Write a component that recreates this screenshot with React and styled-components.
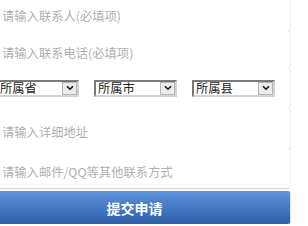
import styled, { createGlobalStyle } from "styled-components";

const GlobalStyle = createGlobalStyle`
  html, body {
    margin: 0;
    padding: 0;
    background: #fff;
    overflow: hidden;
  }
`;

const FONT = `"Noto Sans CJK SC", "Noto Sans", sans-serif`;

const Form = styled.form`
  width: 295px;
  margin-left: -5px;
  margin-top: -7px;
  display: flex;
  flex-direction: column;
  font-family: ${FONT};
`;

const Row = styled.div`
  height: ${(p) => p.$h}px;
  box-sizing: border-box;
  display: flex;
  align-items: center;
  padding-top: ${(p) => p.$pt ?? 7}px;
  background: #fff;
  border-radius: 3px;
  box-shadow: 0 1px 1px rgba(0, 0, 0, 0.18), 1px 0 1px rgba(0, 0, 0, 0.05);
`;

const Input = styled.input`
  width: 100%;
  border: none;
  outline: none;
  background: transparent;
  padding: 0 0 0 7px;
  font-family: ${FONT};
  font-size: 12.3px;
  color: #333;

  &::placeholder {
    color: #b0b0b0;
  }
`;

const SelectRow = styled.div`
  display: flex;
  align-items: center;
  gap: 15px;
  padding-left: 1px;
`;

const SelectBox = styled.div`
  position: relative;
  width: 83px;
  height: 17px;
  flex: none;
`;

const Select = styled.select`
  appearance: none;
  -webkit-appearance: none;
  display: block;
  width: 83px;
  height: 17px;
  min-height: 0;
  box-sizing: border-box;
  margin: 0;
  padding: 0 0 0 2px;
  border: 2px solid;
  border-color: #7a7a7a #d4d4d4 #d4d4d4 #7a7a7a;
  border-radius: 0;
  background: #fff;
  font-family: ${FONT};
  font-size: 12.3px;
  line-height: 13px;
  color: #222;
  outline: none;
`;

const ArrowBox = styled.span`
  position: absolute;
  right: 2px;
  top: 2px;
  width: 15px;
  height: 13px;
  box-sizing: border-box;
  background: #ececec;
  border: 1px solid #b4b4b4;
  display: flex;
  align-items: center;
  justify-content: center;
  pointer-events: none;
`;

const Submit = styled.button`
  margin-top: 3px;
  height: 33px;
  border: none;
  border-radius: 2px;
  background: linear-gradient(#5d92d8, #4377c4 55%, #2f5ea9);
  box-shadow: 0 2px 1px rgba(0, 0, 0, 0.18), 1px 0 1px rgba(0, 0, 0, 0.1);
  color: #fff;
  font-family: ${FONT};
  font-size: 14px;
  font-weight: bold;
  padding: 0 16px 0 0;
  cursor: pointer;
`;

function Chevron() {
  return (
    <svg width="8" height="6" viewBox="0 0 8 6">
      <path d="M1 1.2 L4 4.2 L7 1.2" fill="none" stroke="#111" strokeWidth="1.6" />
    </svg>
  );
}

function Dropdown({ label }) {
  return (
    <SelectBox>
      <Select defaultValue="">
        <option value="">{label}</option>
      </Select>
      <ArrowBox>
        <Chevron />
      </ArrowBox>
    </SelectBox>
  );
}

export default function App() {
  return (
    <>
      <GlobalStyle />
      <Form onSubmit={(e) => e.preventDefault()}>
        <Row $h={38}>
          <Input placeholder="请输入联系人(必填项)" />
        </Row>
        <Row $h={37}>
          <Input placeholder="请输入联系电话(必填项)" />
        </Row>
        <Row $h={40} $pt={0}>
          <SelectRow>
            <Dropdown label="所属省" />
            <Dropdown label="所属市" />
            <Dropdown label="所属县" />
          </SelectRow>
        </Row>
        <Row $h={41}>
          <Input placeholder="请输入详细地址" />
        </Row>
        <Row $h={39}>
          <Input placeholder="请输入邮件/QQ等其他联系方式" />
        </Row>
        <Submit type="submit">提交申请</Submit>
      </Form>
    </>
  );
}
